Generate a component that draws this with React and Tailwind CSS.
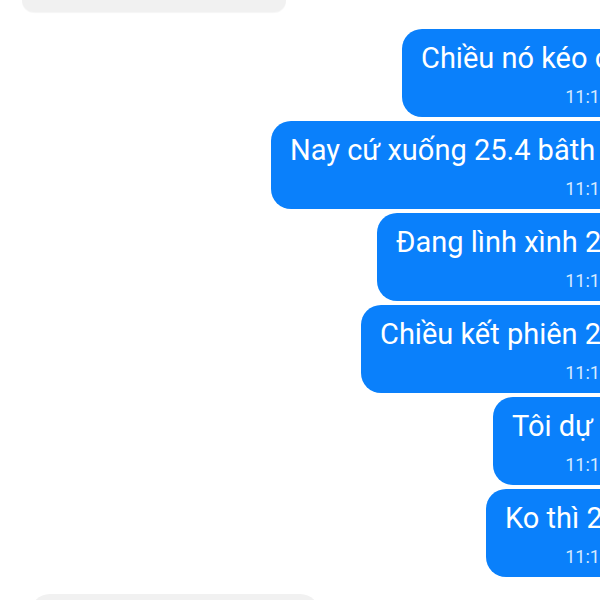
const messages = [
  { text: "Chiều nó kéo cao", time: "11:17", ml: "ml-[402px]" },
  { text: "Nay cứ xuống 25.4 bâth", time: "11:17", ml: "ml-[271px]" },
  { text: "Đang lình xình 25", time: "11:18", ml: "ml-[377px]" },
  { text: "Chiều kết phiên 25", time: "11:18", ml: "ml-[361px]" },
  { text: "Tôi dự đoán", time: "11:18", ml: "ml-[493px]" },
  { text: "Ko thì 25", time: "11:18", ml: "ml-[486px]" },
];

const Bubble = ({ text, time, ml }) => (
  <div className={`${ml} h-[88px] rounded-[20px] bg-[#0a80fb] overflow-hidden pl-[19px] pr-[15px] pt-[11px] flex flex-col`}>
    <div className="text-[29px] leading-[36px] text-white whitespace-nowrap">{text}</div>
    <div className="mt-[10px] self-end text-[18px] leading-[21px] text-[#d6e9ff] whitespace-nowrap">{time}</div>
  </div>
);

export default function App() {
  return (
    <div className="w-[600px] h-[600px] overflow-hidden bg-white" style={{ fontFamily: "Roboto, 'Noto Sans', sans-serif" }}>
      <div className="w-[625px] flex flex-col">
        <div className="ml-[22px] w-[264px] h-[12px] rounded-b-[20px] bg-[#f1f1f1] shadow-[0_1px_1px_rgba(0,0,0,0.04)]" />
        <div className="mt-[17px] flex flex-col gap-[4px]">
          {messages.map((m, i) => (
            <Bubble key={i} {...m} />
          ))}
        </div>
        <div className="mt-[17px] ml-[30px] w-[290px] h-[30px] rounded-t-[20px] bg-[#f1f1f1]" />
      </div>
    </div>
  );
}
